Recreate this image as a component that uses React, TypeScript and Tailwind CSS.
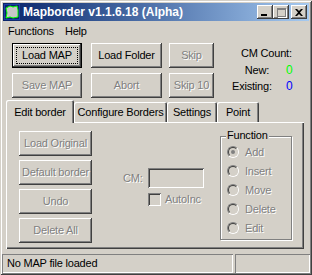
import React from 'react';

const raised =
  'shadow-[inset_-1px_-1px_#404040,inset_1px_1px_#fff,inset_-2px_-2px_#808080,inset_2px_2px_#d4d0c8]';
const sunken =
  'shadow-[inset_1px_1px_#808080,inset_-1px_-1px_#fff,inset_2px_2px_#404040,inset_-2px_-2px_#d4d0c8]';
const grayText = 'text-[#808080] [text-shadow:1px_1px_0_#fff]';
const tabEdge = 'shadow-[inset_1px_1px_#fff,inset_-1px_0_#404040,inset_-2px_0_#808080]';

type BtnProps = { label: string; w: string; disabled?: boolean; def?: boolean };

const Btn: React.FC<BtnProps> = ({ label, w, disabled, def }) => {
  if (def) {
    return (
      <div className={`${w} h-[25px] border border-black bg-[#d4d0c8] flex`}>
        <div className={`flex-1 flex p-[3px] ${raised}`}>
          <div className="flex-1 border border-dotted border-black flex items-center justify-center">
            {label}
          </div>
        </div>
      </div>
    );
  }
  return (
    <div
      className={`${w} h-[25px] bg-[#d4d0c8] flex items-center justify-center whitespace-nowrap ${raised} ${
        disabled ? grayText : ''
      }`}
    >
      {label}
    </div>
  );
};

const Radio: React.FC<{ label: string; checked?: boolean }> = ({ label, checked }) => (
  <div className="flex items-center h-[12px]">
    <div className="w-[12px] h-[12px] rounded-full border border-t-[#808080] border-l-[#808080] border-b-white border-r-white">
      <div className="w-full h-full rounded-full border border-t-[#404040] border-l-[#404040] border-b-[#d4d0c8] border-r-[#d4d0c8] flex items-center justify-center">
        {checked && <div className="w-[4px] h-[4px] rounded-full bg-[#808080]" />}
      </div>
    </div>
    <span className={`ml-[6px] leading-[13px] ${grayText}`}>{label}</span>
  </div>
);

const AppIcon = () => (
  <svg width="16" height="16" viewBox="0 0 16 16">
    <rect x="0" y="0" width="16" height="16" fill="#0a246a" />
    <rect x="0.5" y="0.5" width="15" height="15" fill="none" stroke="#1c3fa8" />
    <path d="M2 4 L6 2 L9 3 L13 2 L14 6 L14 13 L9 14 L6 13 L2 14 L3 9 Z" fill="#c8c8c8" stroke="#00ff00" strokeWidth="1" />
  </svg>
);

export default function App() {
  return (
    <div className="w-[312px] h-[275px] bg-[#d4d0c8] p-[3px] pb-[2px] flex flex-col text-[11px] tracking-[-0.2px] text-black font-['Liberation_Sans',Arial,sans-serif] shadow-[inset_1px_1px_#d4d0c8,inset_-1px_-1px_#404040,inset_2px_2px_#fff,inset_-2px_-2px_#808080] overflow-hidden">
      {/* title bar */}
      <div className="h-[18px] shrink-0 flex items-center pl-[1px] pr-[2px] bg-linear-to-r from-[#0a246a] to-[#a6caf0]">
        <AppIcon />
        <span className="ml-[3px] text-white font-bold text-[12px] tracking-normal leading-[14px]">Mapborder v1.1.6.18 (Alpha)</span>
        <div className="ml-auto flex items-center">
          <div className={`w-[16px] h-[14px] bg-[#d4d0c8] ${raised} flex items-end pl-[4px] pb-[3px]`}>
            <div className="w-[6px] h-[2px] bg-black" />
          </div>
          <div className={`w-[16px] h-[14px] bg-[#d4d0c8] ${raised} flex items-center justify-center`}>
            <div className="w-[9px] h-[9px] border border-t-2 border-[#808080] shadow-[1px_1px_#fff]" />
          </div>
          <div className={`ml-[2px] w-[16px] h-[14px] bg-[#d4d0c8] ${raised} flex items-center justify-center`}>
            <svg width="8" height="7" viewBox="0 0 8 7">
              <path d="M0 0h2l2 2 2-2h2L5 3.5 8 7H6L4 5 2 7H0l3-3.5z" fill="#000" />
            </svg>
          </div>
        </div>
      </div>

      {/* menu bar */}
      <div className="h-[19px] mt-[1px] shrink-0 flex items-center pl-[5px] gap-[11px]">
        <span>Functions</span>
        <span>Help</span>
      </div>

      {/* top buttons + counter */}
      <div className="h-[59px] shrink-0 flex pl-[9px] pt-[2px]">
        <div className="flex flex-col gap-[5px]">
          <div className="flex">
            <Btn label="Load MAP" w="w-[70px]" def />
            <div className="ml-[9px]">
              <Btn label="Load Folder" w="w-[71px]" />
            </div>
            <div className="ml-[7px]">
              <Btn label="Skip" w="w-[45px]" disabled />
            </div>
          </div>
          <div className="flex">
            <Btn label="Save MAP" w="w-[70px]" disabled />
            <div className="ml-[9px]">
              <Btn label="Abort" w="w-[71px]" disabled />
            </div>
            <div className="ml-[7px]">
              <Btn label="Skip 10" w="w-[45px]" disabled />
            </div>
          </div>
        </div>
        <div className="ml-[18px] w-[62px] flex flex-col leading-[13px]">
          <div className="mt-[4px] pl-[9px]">CM Count:</div>
          <div className="mt-[4px] flex">
            <span className="w-[37px] text-right">New:</span>
            <span className="ml-[17px] text-[#00ff00] text-[12px]">0</span>
          </div>
          <div className="mt-[3px] flex">
            <span className="w-[37px] text-right">Existing:</span>
            <span className="ml-[17px] text-[#0000ff] text-[12px]">0</span>
          </div>
        </div>
      </div>

      {/* tabs */}
      <div className="h-[22px] shrink-0 flex items-end pl-[3px] whitespace-nowrap">
        <div className={`relative z-10 w-[68px] h-[23px] mb-[-1px] bg-[#d4d0c8] rounded-t-[2px] flex items-start justify-center pt-[4px] ${tabEdge}`}>
          Edit border
        </div>
        <div className={`w-[93px] h-[20px] rounded-t-[2px] flex items-center justify-center ${tabEdge}`}>
          Configure Borders
        </div>
        <div className={`w-[50px] h-[20px] rounded-t-[2px] flex items-center justify-center ${tabEdge}`}>
          Settings
        </div>
        <div className={`w-[42px] h-[20px] rounded-t-[2px] flex items-center justify-center ${tabEdge}`}>
          Point
        </div>
      </div>

      {/* tab panel */}
      <div className="ml-[3px] w-[298px] h-[127px] shrink-0 flex shadow-[inset_1px_1px_#fff,inset_-1px_-1px_#404040,inset_-2px_-2px_#808080]">
        <div className="ml-[13px] mt-[9px] flex flex-col gap-[4px]">
          <Btn label="Load Original" w="w-[73px]" disabled />
          <Btn label="Default border" w="w-[73px]" disabled />
          <Btn label="Undo" w="w-[73px]" disabled />
          <Btn label="Delete All" w="w-[73px]" disabled />
        </div>
        <div className="ml-[31px] mt-[46px] flex flex-col">
          <div className="flex">
            <div className={`w-[25px] h-[20px] flex items-center ${grayText}`}>CM:</div>
            <div className={`w-[56px] h-[20px] bg-[#d4d0c8] ${sunken}`} />
          </div>
          <div className="mt-[3px] ml-[25px] flex items-center">
            <div className={`w-[13px] h-[13px] bg-[#d4d0c8] ${sunken}`} />
            <span className={`ml-[4px] ${grayText}`}>AutoInc</span>
          </div>
        </div>
        <div className="relative ml-[16px] mt-[14px] w-[72px] h-[104px] border border-[#808080] shadow-[inset_1px_1px_#fff,1px_1px_#fff]">
          <span className="absolute top-[-8px] left-[5px] px-[1px] bg-[#d4d0c8] leading-[13px]">Function</span>
          <div className="pt-[9px] pl-[6px] flex flex-col gap-[7px]">
            <Radio label="Add" checked />
            <Radio label="Insert" />
            <Radio label="Move" />
            <Radio label="Delete" />
            <Radio label="Edit" />
          </div>
        </div>
      </div>

      {/* status bar */}
      <div className="mt-[5px] mx-[-1px] h-[19px] shrink-0 flex gap-[2px]">
        <div className="w-[231px] h-full flex items-center pl-[5px] shadow-[inset_1px_1px_#808080,inset_-1px_-1px_#fff]">
          No MAP file loaded
        </div>
        <div className="flex-1 h-full shadow-[inset_1px_1px_#808080,inset_-1px_-1px_#fff]" />
      </div>
    </div>
  );
}
